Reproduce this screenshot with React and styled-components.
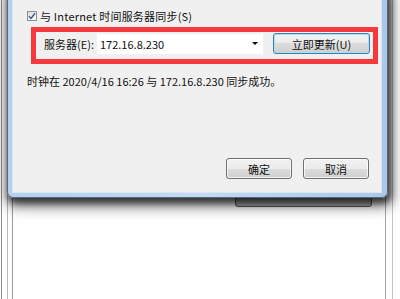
import React from "react";
import styled, { createGlobalStyle } from "styled-components";

const GlobalStyle = createGlobalStyle`
  html, body {
    margin: 0;
    padding: 0;
  }
  body {
    background: #fff;
    font-family: "Noto Sans CJK SC", "Noto Sans", sans-serif;
  }
`;

const Desktop = styled.div`
  position: relative;
  width: 400px;
  height: 299px;
  overflow: hidden;
  box-sizing: border-box;
  padding-top: 185px;
  display: flex;
  flex-direction: column;
  background-color: #fff;
  background-image: linear-gradient(#8c8c8c, #8c8c8c),
    linear-gradient(#b8b8b8, #b8b8b8), linear-gradient(#9a9a9a, #9a9a9a),
    linear-gradient(#a4a4a4, #a4a4a4), linear-gradient(#c4c4c4, #c4c4c4);
  background-size: 1px 100%;
  background-repeat: no-repeat;
  background-position: 1px 0, 7px 0, 12px 0, 385px 0, 392px 0;
`;

const BackRow = styled.div`
  display: flex;
  justify-content: flex-end;
  padding-right: 28px;
`;

const BackButton = styled.div`
  width: 137px;
  height: 22px;
  box-sizing: border-box;
  border: 1px solid #555;
  border-radius: 3px;
  background: linear-gradient(#d8d8d8 0%, #d0d0d0 50%, #c4c4c4 50%, #b8b8b8 100%);
`;

const Dialog = styled.div`
  position: absolute;
  left: 7px;
  top: -12px;
  width: 381px;
  height: 210px;
  box-sizing: border-box;
  display: flex;
  padding: 0 5px 4px 4px;
  border: 1px solid #56677a;
  border-top: none;
  border-radius: 0 0 6px 6px;
  background: linear-gradient(to right, #b4d0ee, #c2daf2 50%, #a9c8ea);
  box-shadow: 2px 4px 6px 1px rgba(0, 0, 0, 0.55),
    2px 6px 14px 2px rgba(0, 0, 0, 0.6);
`;

const Client = styled.div`
  flex: 1;
  min-width: 0;
  display: flex;
  flex-direction: column;
  box-sizing: border-box;
  padding: 21px 12px 13px 14px;
  background: #f0f0f0;
  border: 1px solid #dce7f4;
  border-top: none;
  font-size: 11px;
  color: #111;
`;

const CheckRow = styled.label`
  display: flex;
  align-items: center;
  gap: 3px;
  height: 14px;
`;

const CheckBox = styled.span`
  width: 10px;
  height: 10px;
  box-sizing: border-box;
  border: 1px solid #8e8f8f;
  background: linear-gradient(135deg, #dcdcdc, #fbfbfb);
  display: flex;
  align-items: center;
  justify-content: center;
`;

const Text = styled.span`
  white-space: nowrap;
  line-height: 14px;
  letter-spacing: ${(p) => p.$ls || 0}px;
`;

const Highlight = styled.div`
  flex-shrink: 0;
  margin: 4px 0 0 4px;
  width: 347px;
  height: 37px;
  box-sizing: border-box;
  border: 5px solid #f5393d;
  padding: 1px 3px 5px 8px;
  display: flex;
  align-items: center;
`;

const ServerLabel = styled.span`
  width: 53px;
  white-space: nowrap;
`;

const Combo = styled.div`
  width: 166px;
  height: 20px;
  box-sizing: border-box;
  background: #fff;
  display: flex;
  align-items: center;
  justify-content: space-between;
  padding: 0 5px 0 3px;
`;

const Arrow = styled.span`
  width: 0;
  height: 0;
  border-left: 3px solid transparent;
  border-right: 3px solid transparent;
  border-top: 3px solid #000;
`;

const Button = styled.button`
  flex-shrink: 0;
  width: ${(p) => p.$w}px;
  height: 21px;
  margin-left: ${(p) => p.$ml || 0}px;
  box-sizing: border-box;
  padding: 0;
  font: inherit;
  color: #111;
  border: 1px solid ${(p) => (p.$focus ? "#3c7fb1" : "#707070")};
  border-radius: 3px;
  background: linear-gradient(#f2f2f2 0%, #ebebeb 50%, #dddddd 50%, #cfcfcf 100%);
  box-shadow: inset 0 0 0 1px
    ${(p) => (p.$focus ? "#a9def7" : "rgba(255, 255, 255, 0.75)")};
`;

const Status = styled.div`
  margin-top: 10px;
  line-height: 14px;
  white-space: nowrap;
`;

const Actions = styled.div`
  margin-top: auto;
  display: flex;
  justify-content: flex-end;
  gap: 11px;
`;

export default function App() {
  return (
    <>
      <GlobalStyle />
      <Desktop>
        <BackRow>
          <BackButton />
        </BackRow>
        <Dialog>
          <Client>
            <CheckRow>
              <CheckBox>
                <svg width="8" height="8" viewBox="0 0 8 8">
                  <path
                    d="M1 4.2 L3 6.4 L7 1.2"
                    fill="none"
                    stroke="#3a5595"
                    strokeWidth="1.4"
                  />
                </svg>
              </CheckBox>
              <Text $ls={0.2}>与 Internet 时间服务器同步(S)</Text>
            </CheckRow>
            <Highlight>
              <ServerLabel>服务器(E):</ServerLabel>
              <Combo>
                <Text>172.16.8.230</Text>
                <Arrow />
              </Combo>
              <Button $w={97} $ml={10} $focus>
                立即更新(U)
              </Button>
            </Highlight>
            <Status>时钟在 2020/4/16 16:26 与 172.16.8.230 同步成功。</Status>
            <Actions>
              <Button $w={66}>确定</Button>
              <Button $w={66}>取消</Button>
            </Actions>
          </Client>
        </Dialog>
      </Desktop>
    </>
  );
}
